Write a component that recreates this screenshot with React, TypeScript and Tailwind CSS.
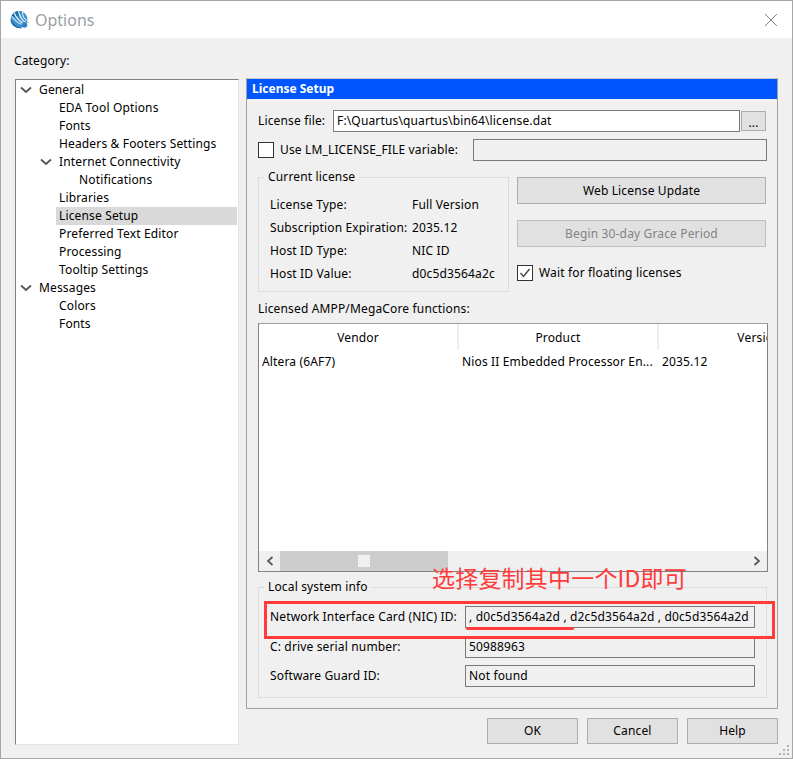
import React from "react";

const FONT = "font-['Noto_Sans','Liberation_Sans',sans-serif]";

function Chevron() {
  return (
    <svg width="12" height="8" viewBox="0 0 12 8" className="shrink-0">
      <path d="M1 1.5 L6 6 L11 1.5" fill="none" stroke="#555" strokeWidth="1.8" />
    </svg>
  );
}

const tree: { label: string; level: number; open?: boolean; selected?: boolean }[] = [
  { label: "General", level: 0, open: true },
  { label: "EDA Tool Options", level: 1 },
  { label: "Fonts", level: 1 },
  { label: "Headers & Footers Settings", level: 1 },
  { label: "Internet Connectivity", level: 1, open: true },
  { label: "Notifications", level: 2 },
  { label: "Libraries", level: 1 },
  { label: "License Setup", level: 1, selected: true },
  { label: "Preferred Text Editor", level: 1 },
  { label: "Processing", level: 1 },
  { label: "Tooltip Settings", level: 1 },
  { label: "Messages", level: 0, open: true },
  { label: "Colors", level: 1 },
  { label: "Fonts", level: 1 },
];

const indent = ["pl-[23px]", "pl-[43px]", "pl-[63px]"];
const chevronPos = ["left-[4px]", "left-[24px]", "left-[44px]"];

function Tree() {
  return (
    <div className="w-[224px] h-[666px] shrink-0 bg-white border border-[#e4e4e4] border-t-[#808080] border-l-[#808080] pt-[1px]">
      {tree.map((t, i) => (
        <div key={i} className={`relative h-[18px] leading-[18px] ${indent[t.level]}`}>
          {t.open && (
            <span className={`absolute top-[5px] ${chevronPos[t.level]}`}>
              <Chevron />
            </span>
          )}
          {t.selected && <span className="absolute left-[40px] right-[1px] top-0 bottom-0 bg-[#d9d9d9]" />}
          <span className="relative">{t.label}</span>
        </div>
      ))}
    </div>
  );
}

function Field({ children, className = "" }: { children?: React.ReactNode; className?: string }) {
  return (
    <div className={`border border-[#7a7a7a] px-[3px] leading-[20px] whitespace-nowrap overflow-hidden ${className}`}>
      {children}
    </div>
  );
}

function Btn({ children, className = "" }: { children: React.ReactNode; className?: string }) {
  return (
    <div className={`flex items-center justify-center border border-[#adadad] bg-[#e1e1e1] ${className}`}>
      {children}
    </div>
  );
}

function Legend({ children }: { children: React.ReactNode }) {
  return <div className="absolute left-[5px] -top-[10px] bg-[#f0f0f0] px-[4px] leading-[18px]">{children}</div>;
}

function Kv({ k, v }: { k: string; v: string }) {
  return (
    <div className="flex h-[23px] items-center">
      <span className="w-[142px] whitespace-nowrap">{k}</span>
      <span className="whitespace-nowrap">{v}</span>
    </div>
  );
}

function LocalRow({ label, value, cls }: { label: string; value: string; cls: string }) {
  return (
    <div className={`flex items-center ${cls}`}>
      <span className="w-[206px] shrink-0 pl-[11px] whitespace-nowrap">{label}</span>
      <Field className="w-[290px] h-[22px]">{value}</Field>
    </div>
  );
}

function QuartusIcon() {
  return (
    <svg width="19" height="20" viewBox="0 0 19 20" className="shrink-0">
      <circle cx="9" cy="9.5" r="8.5" fill="#3f8fca" />
      <path d="M1 7 A8.5 8.5 0 0 1 11 1.2 L9 6 Z" fill="#1f70ad" />
      <path d="M1.5 6 C5 11 10 14.5 15 15" stroke="#d8ecf8" strokeWidth="1.1" fill="none" />
      <path d="M4 2.5 C6 7.5 9 11 14 14" stroke="#f2f9fd" strokeWidth="1.1" fill="none" />
      <path d="M8.5 1.2 C9.5 6 11.5 9.5 15.5 12.5" stroke="#f2f9fd" strokeWidth="1.1" fill="none" />
      <path d="M12.5 2 C12.5 6 14 9 17 10.5" stroke="#f2f9fd" strokeWidth="1" fill="none" />
      <path d="M1 10.5 C3 15 7 18 11.5 18" stroke="#1b629b" strokeWidth="1.2" fill="none" />
      <circle cx="14.5" cy="15" r="2.8" fill="#2f83c4" />
      <path d="M16.5 13.5 L18.5 12" stroke="#9ccbe9" strokeWidth="1.2" />
    </svg>
  );
}

export default function App() {
  return (
    <div className={`relative w-[793px] h-[759px] overflow-hidden bg-[#f0f0f0] border border-[#a6a6a6] text-[12px] tracking-[0.15px] text-black ${FONT}`}>
      {/* Title bar */}
      <div className="flex h-[37px] items-center bg-white pl-[9px] pr-[14px]">
        <QuartusIcon />
        <span className="ml-[6px] text-[16px] tracking-normal text-[#9aa0a4]">Options</span>
        <svg width="14" height="14" viewBox="0 0 14 14" className="ml-auto">
          <path d="M1 1 L13 13 M13 1 L1 13" stroke="#808080" strokeWidth="1" fill="none" />
        </svg>
      </div>

      {/* Body */}
      <div className="pl-[14px] pr-[14px]">
        <div className="h-[41px] pt-[14px] -ml-[1px] leading-[18px]">Category:</div>
        <div className="flex gap-[7px]">
          <Tree />
          <div className="w-[532px] -mt-[1px]">
            {/* Panel */}
            <div className="h-[631px] border border-[#a0a0a0] border-t-[#c8c8c8]">
              <div className="h-[20px] bg-[#0055ff] pl-[5px] text-white font-bold tracking-normal leading-[20px]">License Setup</div>

              <div className="pl-[11px] pr-[10px]">
                <div className="flex items-center mt-[11px] h-[22px]">
                  <span className="w-[75px] whitespace-nowrap">License file:</span>
                  <Field className="w-[407px] h-[22px] bg-white">F:\Quartus\quartus\bin64\license.dat</Field>
                  <Btn className="ml-[1px] w-[25px] h-[20px] items-end pb-[2px] leading-[10px]">...</Btn>
                </div>
                <div className="flex items-center mt-[7px] h-[22px]">
                  <span className="w-[16px] h-[16px] border border-[#333] bg-white shrink-0" />
                  <span className="ml-[6px] w-[193px] whitespace-nowrap">Use LM_LICENSE_FILE variable:</span>
                  <Field className="w-[294px] h-[22px]" />
                </div>

                <div className="flex mt-[16px]">
                  <div className="relative w-[251px] h-[115px] border border-[#dcdcdc] pl-[11px] pt-[15px] shrink-0">
                    <Legend>Current license</Legend>
                    <Kv k="License Type:" v="Full Version" />
                    <Kv k="Subscription Expiration:" v="2035.12" />
                    <Kv k="Host ID Type:" v="NIC ID" />
                    <Kv k="Host ID Value:" v="d0c5d3564a2c" />
                  </div>
                  <div className="ml-[8px] w-[249px]">
                    <Btn className="h-[27px]">Web License Update</Btn>
                    <Btn className="h-[27px] mt-[16px] bg-[#cccccc] border-[#bfbfbf] text-[#838383]">Begin 30-day Grace Period</Btn>
                    <div className="flex items-center mt-[18px] h-[16px]">
                      <span className="flex items-center justify-center w-[16px] h-[16px] border border-[#333] bg-white shrink-0">
                        <svg width="12" height="10" viewBox="0 0 12 10">
                          <path d="M1.5 5 L4.5 8.5 L10.5 1" stroke="#444" strokeWidth="1.4" fill="none" />
                        </svg>
                      </span>
                      <span className="ml-[6px] whitespace-nowrap">Wait for floating licenses</span>
                    </div>
                  </div>
                </div>

                <div className="mt-[8px] leading-[18px]">Licensed AMPP/MegaCore functions:</div>

                {/* Table */}
                <div className="mt-[5px] h-[249px] w-[510px] border border-[#828282] border-t-[#a0a0a0] bg-white flex flex-col overflow-hidden">
                  <div className="flex h-[26px] shrink-0">
                    <div className="w-[200px] shrink-0 border-r-2 border-[#eeeeee] text-center leading-[28px]">Vendor</div>
                    <div className="w-[200px] shrink-0 border-r-2 border-[#eeeeee] text-center leading-[28px]">Product</div>
                    <div className="w-[200px] shrink-0 text-center leading-[28px]">Version</div>
                  </div>
                  <div className="flex h-[22px] shrink-0 leading-[24px]">
                    <div className="w-[200px] shrink-0 pl-[3px]">Altera (6AF7)</div>
                    <div className="w-[200px] shrink-0 pl-[3px] whitespace-nowrap">Nios II Embedded Processor En...</div>
                    <div className="w-[100px] shrink-0 pl-[3px]">2035.12</div>
                  </div>
                  <div className="flex-1" />
                  <div className="flex h-[20px] shrink-0 items-center bg-[#f0f0f0]">
                    <div className="flex w-[21px] justify-center">
                      <svg width="8" height="10" viewBox="0 0 8 10"><path d="M6.5 1 L2 5 L6.5 9" stroke="#555" strokeWidth="1.7" fill="none" /></svg>
                    </div>
                    <div className="flex items-center justify-center w-[168px] h-[20px] bg-[#cdcdcd]">
                      <span className="w-[12px] h-[12px] bg-[#f0f0f0]" />
                    </div>
                    <div className="ml-auto flex w-[21px] justify-center">
                      <svg width="8" height="10" viewBox="0 0 8 10"><path d="M1.5 1 L6 5 L1.5 9" stroke="#555" strokeWidth="1.7" fill="none" /></svg>
                    </div>
                  </div>
                </div>

                {/* Local system info */}
                <div className="relative mt-[15px] w-[509px] h-[111px] border border-[#dcdcdc]">
                  <Legend>Local system info</Legend>
                  <LocalRow cls="mt-[18px]" label="Network Interface Card (NIC) ID:" value=", d0c5d3564a2d , d2c5d3564a2d , d0c5d3564a2d" />
                  <LocalRow cls="mt-[8px]" label="C: drive serial number:" value="50988963" />
                  <LocalRow cls="mt-[7px]" label="Software Guard ID:" value="Not found" />
                </div>
              </div>
            </div>

            {/* Dialog buttons */}
            <div className="flex justify-end gap-[9px] mt-[9px]">
              <Btn className="w-[91px] h-[26px]">OK</Btn>
              <Btn className="w-[91px] h-[26px]">Cancel</Btn>
              <Btn className="w-[91px] h-[26px]">Help</Btn>
            </div>
          </div>
        </div>
      </div>

      {/* Annotation overlay */}
      <div className="absolute left-[263px] top-[600px] w-[511px] h-[38px] border-[3px] border-[#ff3b3b]" />
      <div className="absolute left-[465px] top-[626px] w-[108px] h-[3px] rounded-full bg-[#ff3b3b]" />
      <div className="absolute left-[431px] top-[561px] whitespace-nowrap text-[23px] tracking-[0.2px] leading-[30px] text-[#ff3b3b] font-['Noto_Sans_CJK_SC','Noto_Sans',sans-serif]">
        选择复制其中一个ID即可
      </div>

      {/* Resize grip */}
      <svg width="13" height="13" viewBox="0 0 13 13" className="absolute right-[1px] bottom-[1px]">
        <g fill="#b4b4b4">
          <rect x="9" y="1" width="2" height="2" />
          <rect x="5" y="5" width="2" height="2" />
          <rect x="9" y="5" width="2" height="2" />
          <rect x="1" y="9" width="2" height="2" />
          <rect x="5" y="9" width="2" height="2" />
          <rect x="9" y="9" width="2" height="2" />
        </g>
      </svg>
    </div>
  );
}
